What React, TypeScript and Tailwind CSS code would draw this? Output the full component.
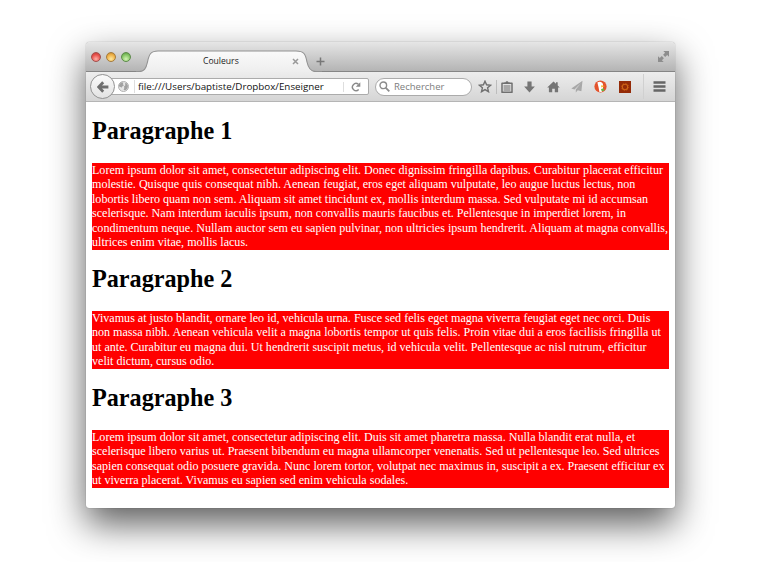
import React from "react";

const sections = [
  {
    title: "Paragraphe 1",
    lines: [
      "Lorem ipsum dolor sit amet, consectetur adipiscing elit. Donec dignissim fringilla dapibus. Curabitur placerat efficitur",
      "molestie. Quisque quis consequat nibh. Aenean feugiat, eros eget aliquam vulputate, leo augue luctus lectus, non",
      "lobortis libero quam non sem. Aliquam sit amet tincidunt ex, mollis interdum massa. Sed vulputate mi id accumsan",
      "scelerisque. Nam interdum iaculis ipsum, non convallis mauris faucibus et. Pellentesque in imperdiet lorem, in",
      "condimentum neque. Nullam auctor sem eu sapien pulvinar, non ultricies ipsum hendrerit. Aliquam at magna convallis,",
      "ultrices enim vitae, mollis lacus.",
    ],
  },
  {
    title: "Paragraphe 2",
    lines: [
      "Vivamus at justo blandit, ornare leo id, vehicula urna. Fusce sed felis eget magna viverra feugiat eget nec orci. Duis",
      "non massa nibh. Aenean vehicula velit a magna lobortis tempor ut quis felis. Proin vitae dui a eros facilisis fringilla ut",
      "ut ante. Curabitur eu magna dui. Ut hendrerit suscipit metus, id vehicula velit. Pellentesque ac nisl rutrum, efficitur",
      "velit dictum, cursus odio.",
    ],
  },
  {
    title: "Paragraphe 3",
    lines: [
      "Lorem ipsum dolor sit amet, consectetur adipiscing elit. Duis sit amet pharetra massa. Nulla blandit erat nulla, et",
      "scelerisque libero varius ut. Praesent bibendum eu magna ullamcorper venenatis. Sed ut pellentesque leo. Sed ultrices",
      "sapien consequat odio posuere gravida. Nunc lorem tortor, volutpat nec maximus in, suscipit a ex. Praesent efficitur ex",
      "ut viverra placerat. Vivamus eu sapien sed enim vehicula sodales.",
    ],
  },
];

function TabBar() {
  return (
    <div className="relative flex h-[30px] items-start border-b border-[#858585] bg-gradient-to-b from-[#e6e6e6] to-[#b4b4b4]">
      <svg className="absolute left-[50px] top-[8px]" width="186" height="22" viewBox="0 0 186 22">
        <defs>
          <linearGradient id="tab" x1="0" y1="0" x2="0" y2="1">
            <stop offset="0" stopColor="#fafafa" />
            <stop offset="1" stopColor="#eeeeee" />
          </linearGradient>
        </defs>
        <path d="M3 22C8 21.5 10 19 11.5 12C13 4 15 1 22 1H160C168 1 169.5 4 171 12C172.5 19 175 21.5 180 22Z" fill="url(#tab)" />
        <path d="M0 21.5H3C8 21.5 10 19 11.5 12C13 4 15 1 22 1H160C168 1 169.5 4 171 12C172.5 19 175 21.5 180 21.5H186" fill="none" stroke="#929292" strokeWidth="1.1" />
      </svg>
      <div className="relative ml-[5px] mt-[10px] flex gap-[5px]">
        <span className="h-[10px] w-[10px] rounded-full border border-[#a34f4c] bg-[radial-gradient(circle_at_50%_75%,#ffb0a8,#e8504b_60%,#b83a38)]" />
        <span className="h-[10px] w-[10px] rounded-full border border-[#a57b3c] bg-[radial-gradient(circle_at_50%_75%,#ffe9a0,#eeb046_60%,#b8802c)]" />
        <span className="h-[10px] w-[10px] rounded-full border border-[#5d8b4a] bg-[radial-gradient(circle_at_50%_75%,#d4f5b4,#83c463_60%,#558f3e)]" />
      </div>
      <span className="relative ml-[72px] mt-[12px] w-[38px] whitespace-nowrap text-[8.6px] leading-[14px] text-[#222]">Couleurs</span>
      <svg className="relative ml-[51px] mt-[16px]" width="7" height="7" viewBox="0 0 7 7">
        <path d="M1 1L6 6M6 1L1 6" stroke="#999" strokeWidth="1.5" />
      </svg>
      <svg className="relative ml-[17px] mt-[15px]" width="9" height="9" viewBox="0 0 9 9">
        <path d="M4.5 .5V8.5M.5 4.5H8.5" stroke="#777" strokeWidth="1.5" />
      </svg>
      <svg className="ml-auto mr-[6px] mt-[9px]" width="11" height="11" viewBox="0 0 11 11" fill="#8d8d8d">
        <path d="M5.3 0H11V5.7L9.2 3.9L7.2 5.9L5.1 3.8L7.1 1.8ZM0 5.3L1.8 7.1L3.8 5.1L5.9 7.2L3.9 9.2L5.7 11H0Z" />
      </svg>
    </div>
  );
}

function Toolbar() {
  return (
    <div className="flex h-[30px] items-center border-b border-[#b5b5b5] bg-gradient-to-b from-[#ededed] to-[#d5d5d5]">
      <div className="z-10 ml-[4px] flex h-[25px] w-[25px] shrink-0 items-center justify-center rounded-full border border-[#929292] bg-gradient-to-b from-[#fafafa] to-[#e3e3e3]">
        <svg width="12" height="12" viewBox="0 0 12 12">
          <path d="M6.2 1.2L1.6 6L6.2 10.8M2 6H11.4" fill="none" stroke="#6e6e6e" strokeWidth="2.8" />
        </svg>
      </div>
      <div className="-ml-[6px] flex h-[17px] w-[260px] shrink-0 items-center rounded-[2px] border border-[#ababab] bg-white">
        <svg className="ml-[8px] shrink-0" width="11" height="11" viewBox="0 0 11 11">
          <circle cx="5.5" cy="5.5" r="5" fill="#e6e6e6" stroke="#b2b2b2" />
          <path d="M1 4L3 1.5L5.5 1.5L4.8 3.2L6 4.3L4 5.8L3.6 6.8L2.6 6L1 5.5ZM7 2L9 2.5L10 5L9.4 7.5L7.5 9.2L5.6 9L6.3 7L6 5.4L7.3 4.2Z" fill="#a2a2a2" />
        </svg>
        <span className="ml-[5px] h-[13px] w-px bg-[#dedede]" />
        <span className="ml-[3px] w-[187px] whitespace-nowrap text-[9.8px] leading-[15px] text-[#111]">file:///Users/baptiste/Dropbox/Enseigner</span>
        <span className="ml-[18px] h-[10px] w-px bg-[#dedede]" />
        <svg className="ml-[7px] shrink-0" width="10" height="10" viewBox="0 0 10 10">
          <path d="M7.7 7.5A3.6 3.6 0 1 1 7.4 2.3" fill="none" stroke="#8a8a8a" strokeWidth="1.4" />
          <path d="M9.3 .2V4.8H4.8Z" fill="#8a8a8a" />
        </svg>
      </div>
      <div className="ml-[6px] flex h-[18px] w-[97px] shrink-0 items-center rounded-full border border-[#ababab] bg-white">
        <svg className="ml-[3px] shrink-0" width="11" height="11" viewBox="0 0 11 11">
          <circle cx="4.3" cy="4.3" r="3.3" fill="none" stroke="#8c8c8c" strokeWidth="1.4" />
          <path d="M6.8 6.8L10.3 10.3" stroke="#8c8c8c" strokeWidth="1.8" />
        </svg>
        <span className="ml-[4px] whitespace-nowrap text-[9.5px] leading-[15px] text-[#7d7d7d]">Rechercher</span>
      </div>
      <svg className="ml-[6px] shrink-0" width="14" height="13" viewBox="0 0 14 13">
        <path d="M7 1.2L8.6 4.8L12.6 5.2L9.6 7.8L10.5 11.7L7 9.6L3.5 11.7L4.4 7.8L1.4 5.2L5.4 4.8Z" fill="none" stroke="#707070" strokeWidth="1.4" />
      </svg>
      <span className="ml-[4px] h-[14px] w-px bg-[#bdbdbd]" />
      <svg className="ml-[4px] shrink-0" width="12" height="12" viewBox="0 0 12 12">
        <path d="M1 2.2H11V11.3H1Z" fill="#e2e2e2" stroke="#6f6f6f" strokeWidth="1.5" strokeLinejoin="round" />
        <path d="M3.2 3V1.4H4.6C4.8 0 7.2 0 7.4 1.4H8.8V3Z" fill="#6f6f6f" />
        <path d="M2.6 5H9.4M2.6 7H9.4M2.6 9H9.4" stroke="#6f6f6f" strokeWidth="1.2" />
      </svg>
      <svg className="ml-[11px] shrink-0" width="11" height="12" viewBox="0 0 11 12">
        <path d="M3.4 .5H7.6V5.6H10.9L5.5 11.5L.1 5.6H3.4Z" fill="#757575" />
      </svg>
      <svg className="ml-[12px] shrink-0" width="13" height="12" viewBox="0 0 13 12">
        <path d="M6.5 .4L9 2.8V1.3H10.7V4.5L12.8 6.6H11.1V11.3H7.8V7.8H5.2V11.3H1.9V6.6H.2Z" fill="#757575" />
      </svg>
      <svg className="ml-[11px] shrink-0" width="12" height="13" viewBox="0 0 12 13">
        <path d="M11.5 .8L.3 8.4L3.5 9.4L9.8 3.2L4.8 9.6V12.6L6.8 10.3L10.4 11.3Z" fill="#a8a8a8" />
      </svg>
      <svg className="ml-[11px] shrink-0" width="13" height="13" viewBox="0 0 13 13">
        <circle cx="6.5" cy="6.5" r="6.1" fill="#e4532d" />
        <path d="M3.4 2.6C5 1 8.6 1.6 9 4.6L9 8.5L8 11.8L5.4 11.9L4.6 7.5Z" fill="#fff" />
        <path d="M7.2 5.3L11 6L7.2 7.4Z" fill="#f8b72b" />
        <path d="M7 9L10 8.2L10.2 11L7.6 11Z" fill="#66b346" />
      </svg>
      <svg className="ml-[12px] shrink-0" width="12" height="12" viewBox="0 0 12 12">
        <rect width="12" height="12" fill="#942b08" />
        <circle cx="6" cy="6" r="2.7" fill="none" stroke="#cf6416" strokeWidth="1.1" />
        <circle cx="6" cy="6" r="3.6" fill="none" stroke="#c45b15" strokeWidth=".9" strokeDasharray="1.2 1.62" />
      </svg>
      <span className="ml-[12px] h-[25px] w-px bg-[#d0d0d0]" />
      <svg className="ml-[9px] shrink-0" width="13" height="11" viewBox="0 0 13 11">
        <path d="M.5 1.5H12.5M.5 5.5H12.5M.5 9.5H12.5" stroke="#666" strokeWidth="2.4" />
      </svg>
    </div>
  );
}

export default function App() {
  return (
    <div className="h-[562px] w-[783px] overflow-hidden bg-white pl-[86px] pt-[42px] font-['Open_Sans',sans-serif]">
      <div className="h-[466px] w-[589px] overflow-hidden rounded-t-[4px] rounded-b-[3px] bg-white shadow-[0_16px_36px_rgba(0,0,0,0.64),0_0_1px_rgba(0,0,0,0.5)]">
        <TabBar />
        <Toolbar />
        <main className="flex flex-col px-[6px] font-['Liberation_Serif',serif]">
          {sections.map((s, i) => (
            <section key={s.title} className={i === 0 ? "pt-[14px]" : "pt-[14.5px]"}>
              <h1 className="text-[24.2px] font-bold leading-[29px] text-black">{s.title}</h1>
              <p className="mt-[17.5px] bg-[#ff0000] text-[12.07px] leading-[14.5px] text-white">
                {s.lines.map((line) => (
                  <span key={line} className="block whitespace-nowrap">{line}</span>
                ))}
              </p>
            </section>
          ))}
        </main>
      </div>
    </div>
  );
}
